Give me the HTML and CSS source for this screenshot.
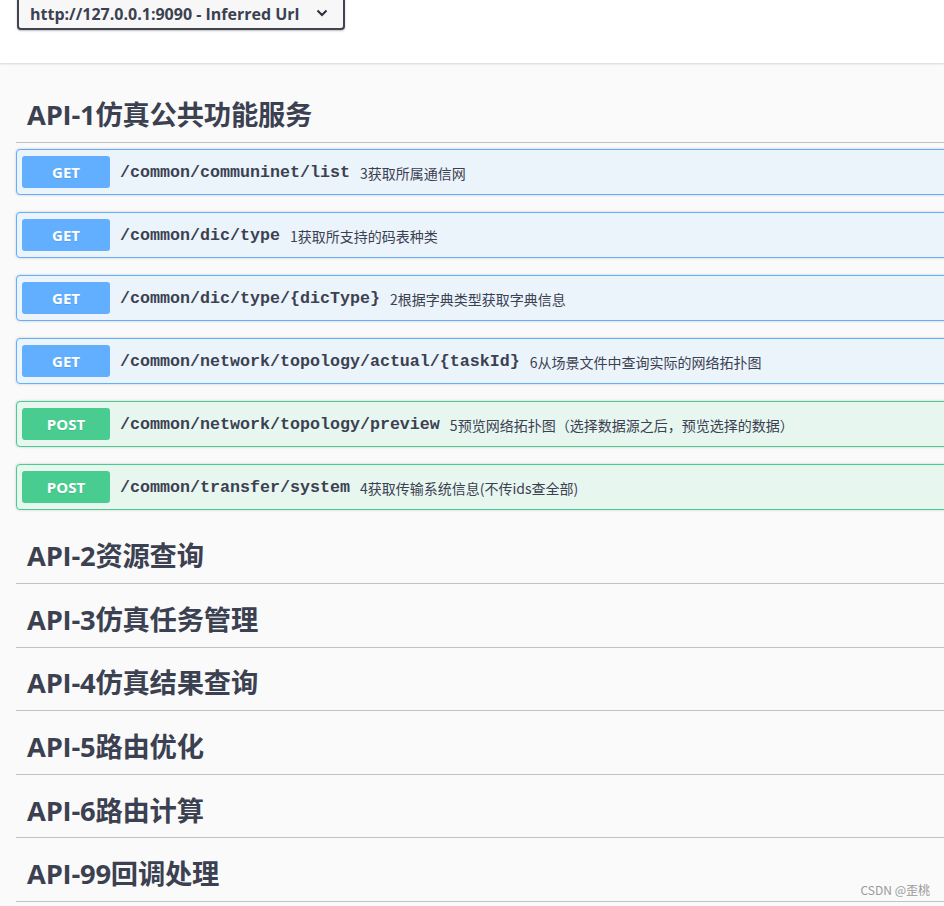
FILE: index.html
```html
<!DOCTYPE html>
<html lang="zh-CN">
<head>
<meta charset="utf-8">
<title>Swagger UI</title>
<link rel="stylesheet" href="styles.css">
</head>
<body>
<div class="topbar">
  <div class="servers">
    <span class="servers-text">http://127.0.0.1:9090 - Inferred Url</span>
    <svg class="chev" width="12" height="8" viewBox="0 0 12 8"><path d="M1.5 1.5 L6 6 L10.5 1.5" fill="none" stroke="#2b2f3a" stroke-width="2"/></svg>
  </div>
</div>
<main class="main">
  <section class="tag-section">
    <h3 class="tag">API-1仿真公共功能服务</h3>
    <div class="ops">
      <div class="op get"><span class="method">GET</span><span class="path">/common/communinet/list</span><span class="desc">3获取所属通信网</span></div>
      <div class="op get"><span class="method">GET</span><span class="path">/common/dic/type</span><span class="desc">1获取所支持的码表种类</span></div>
      <div class="op get"><span class="method">GET</span><span class="path">/common/dic/type/{dicType}</span><span class="desc">2根据字典类型获取字典信息</span></div>
      <div class="op get"><span class="method">GET</span><span class="path">/common/network/topology/actual/{taskId}</span><span class="desc">6从场景文件中查询实际的网络拓扑图</span></div>
      <div class="op post"><span class="method">POST</span><span class="path">/common/network/topology/preview</span><span class="desc">5预览网络拓扑图（选择数据源之后，预览选择的数据）</span></div>
      <div class="op post"><span class="method">POST</span><span class="path">/common/transfer/system</span><span class="desc">4获取传输系统信息(不传ids查全部)</span></div>
    </div>
  </section>
  <section class="tag-section"><h3 class="tag">API-2资源查询</h3></section>
  <section class="tag-section"><h3 class="tag">API-3仿真任务管理</h3></section>
  <section class="tag-section"><h3 class="tag">API-4仿真结果查询</h3></section>
  <section class="tag-section"><h3 class="tag">API-5路由优化</h3></section>
  <section class="tag-section"><h3 class="tag">API-6路由计算</h3></section>
  <section class="tag-section"><h3 class="tag">API-99回调处理</h3></section>
</main>
<div class="watermark">CSDN @歪桃</div>
</body>
</html>
```

FILE: styles.css
```css
html, body {
  margin: 0;
  padding: 0;
}
body {
  background: #fafafa;
  color: #3b4151;
  font-family: "Open Sans", "Noto Sans CJK SC", sans-serif;
  overflow: hidden;
  width: 944px;
  height: 906px;
  position: relative;
}
.topbar {
  background: #fff;
  height: 63px;
  box-shadow: 0 1px 2px 0 rgba(0, 0, 0, 0.15);
  padding-left: 17px;
  box-sizing: border-box;
  overflow: hidden;
}
.servers {
  margin-top: -4px;
  width: 328px;
  height: 34px;
  box-sizing: border-box;
  border: 2px solid #41444e;
  border-radius: 4px;
  background: #f7f7f7;
  box-shadow: 0 1px 2px 0 rgba(0, 0, 0, 0.25);
  display: flex;
  align-items: center;
  justify-content: space-between;
  padding: 0 15px 0 11px;
}
.servers-text {
  font-weight: 700;
  font-size: 16px;
  color: #3b4151;
  padding-top: 1px;
}
.chev {
  margin-top: -1px;
}
.main {
  width: 1100px;
  padding: 21px 0 0 16px;
}
.tag-section {
  margin-bottom: 5px;
}
.tag {
  margin: 0;
  height: 57.6px;
  box-sizing: content-box;
  border-bottom: 1px solid rgba(59, 65, 81, 0.3);
  display: flex;
  align-items: center;
  padding: 0 0 0 11px;
  font-size: 27.3px;
  font-weight: 700;
  color: #3b4151;
  font-family: "Open Sans", "Noto Sans CJK SC", sans-serif;
  letter-spacing: -0.2px;
}
.ops {
  padding: 6.4px 0 10.4px;
  display: flex;
  flex-direction: column;
  gap: 17px;
}
.op {
  height: 46px;
  box-sizing: border-box;
  border: 1px solid #61affe;
  border-radius: 4px;
  background: #ebf3fb;
  box-shadow: 0 0 3px rgba(0, 0, 0, 0.19);
  display: flex;
  align-items: center;
  padding: 0 5px;
}
.op.post {
  border-color: #49cc90;
  background: #e8f6f0;
}
.method {
  width: 88px;
  height: 32px;
  border-radius: 3px;
  background: #61affe;
  color: #fff;
  font-weight: 700;
  font-size: 15px;
  display: flex;
  align-items: center;
  justify-content: center;
  text-shadow: 0 1px 0 rgba(0, 0, 0, 0.1);
  font-family: "Open Sans", sans-serif;
  flex-shrink: 0;
}
.post .method {
  background: #49cc90;
}
.path {
  font-family: "Liberation Mono", "Courier New", monospace;
  font-weight: 700;
  font-size: 16.67px;
  color: #3b4151;
  padding: 2px 10px 0;
  white-space: nowrap;
}
.desc {
  font-size: 14px;
  color: #3b4151;
  font-family: "Noto Sans CJK SC", "Open Sans", sans-serif;
  white-space: nowrap;
  padding-top: 2px;
}
.watermark {
  position: absolute;
  right: 14px;
  bottom: 8px;
  font-size: 12px;
  color: #999;
  font-family: "Noto Sans CJK SC", sans-serif;
}
```
